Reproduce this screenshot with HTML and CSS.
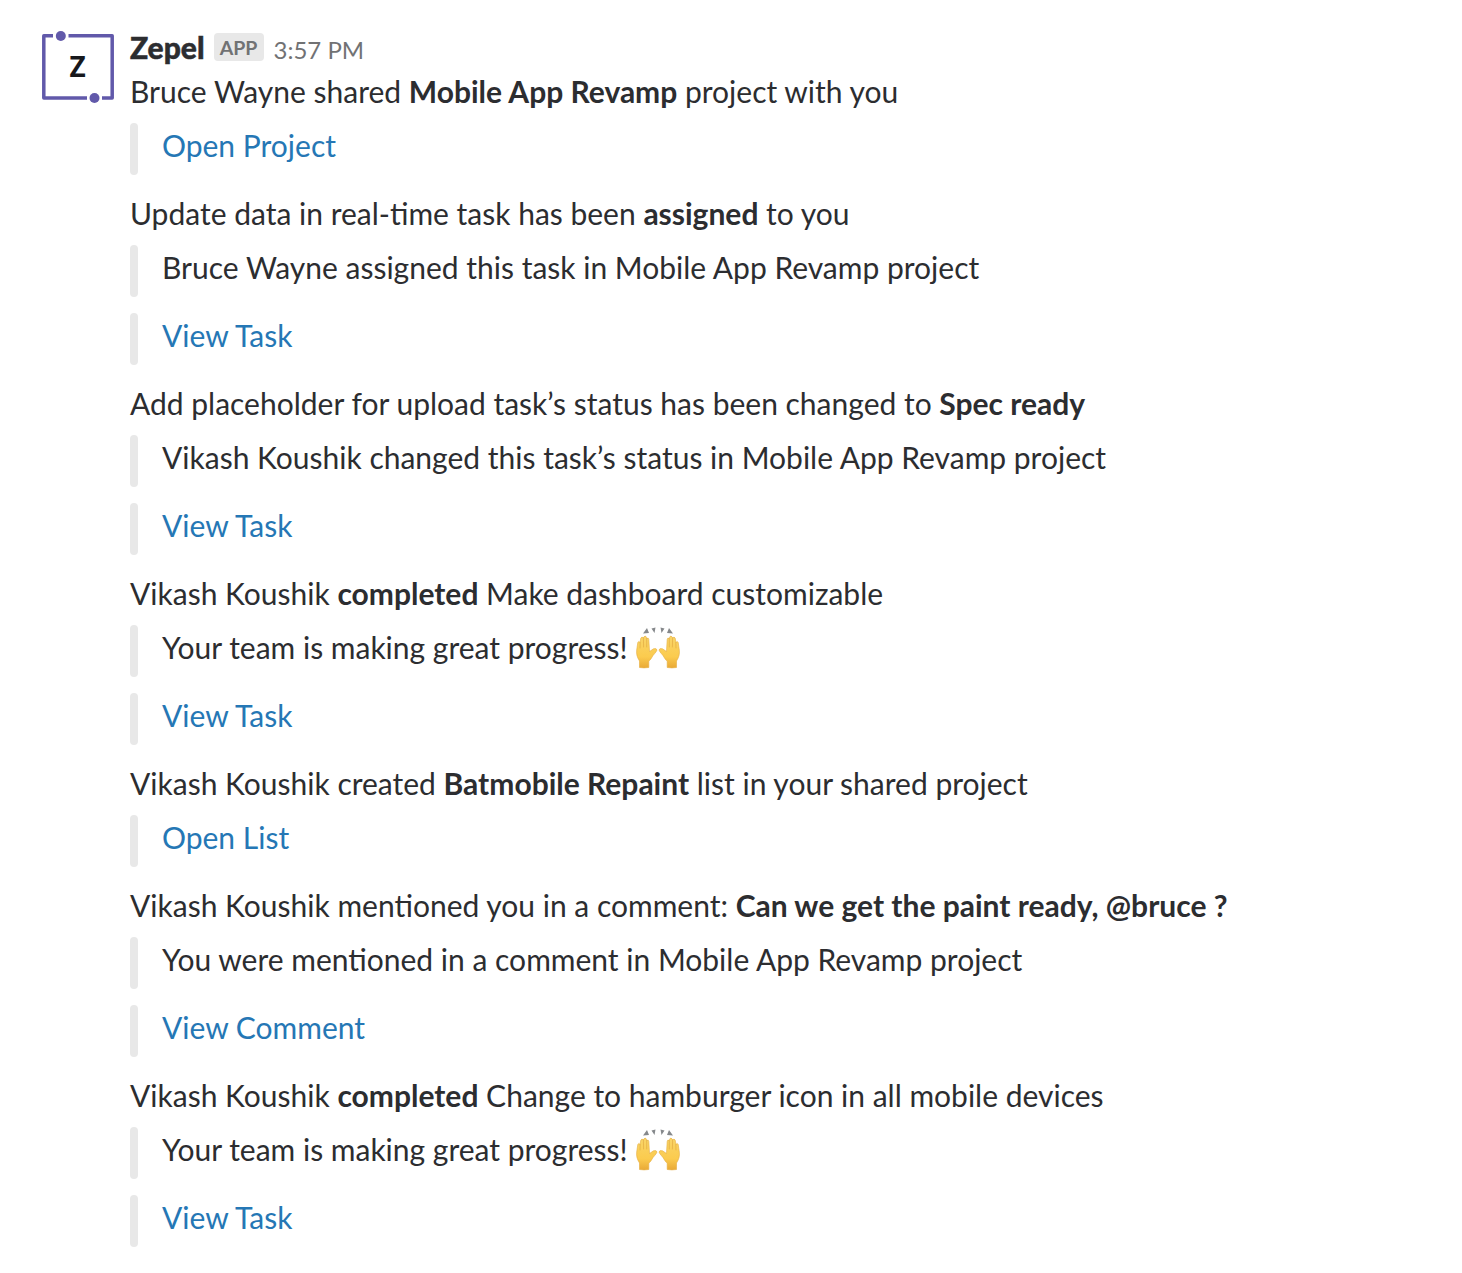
FILE: index.html
```html
<!DOCTYPE html>
<html lang="en">
<head>
<meta charset="utf-8">
<title>Zepel notifications</title>
<link rel="stylesheet" href="styles.css">
</head>
<body>
<svg class="symbols" width="0" height="0">
  <defs>
    <linearGradient id="skin" x1="0" y1="0" x2="0" y2="1"><stop offset="0" stop-color="#f9d568"/><stop offset=".65" stop-color="#fbcb4e"/><stop offset="1" stop-color="#e9a936"/></linearGradient>
  </defs>
  <symbol id="hands" viewBox="0 0 44 44">
    <path fill="#85888b" d="M7 7.500L11 2L13 7zM15.500 2.500L19.500 1.500L18.500 7zM24.500 1.500L28.500 2.500L25.500 7zM33 2L37 7.500L31 7z"/>
    <g id="hand"><path fill="url(#skin)" stroke="#e5ad3e" stroke-width=".6" stroke-linejoin="round" d="M3.500 41.500V35C1 31 .2 28 .7 24L1.800 16.500Q2.600 14.500 3.900 16.500L4.900 12Q6 10 7.200 12L8 10.800Q9.500 9.200 10.400 11.200L10.800 12.500Q12.500 11.300 12.800 13.500L13.500 25.500L17.500 22.800Q20.500 22 21 24C20 27 17 28.500 15.500 32Q14.500 34 12.800 35V41.500Q8 42.300 3.500 41.500z"/><path fill="none" stroke="#dea53e" stroke-width=".6" stroke-linecap="round" d="M4.200 16.500L4 22M7.400 12L7.600 21M10.700 12.500L10.700 21"/></g>
    <use href="#hand" transform="matrix(-1 0 0 1 44 0)"/>
  </symbol>
</svg>
<main class="message">
  <svg class="avatar" viewBox="0 0 72 72"><path fill="none" stroke="#6159aa" stroke-width="3.500" stroke-linejoin="round" d="M11 3.800H1.800V66H45M60 66H70.200V3.800H26.500"/><circle cx="18.800" cy="4" r="5" fill="#6159aa"/><circle cx="52.500" cy="66" r="5" fill="#6159aa"/><text x="35.500" y="45" text-anchor="middle" class="avatar-letter">Z</text></svg>
  <div class="content">
    <header class="header"><b class="name">Zepel</b><span class="badge">APP</span><time class="time">3:57 PM</time></header>
    <section class="item"><p>Bruce Wayne shared <b>Mobile App Revamp</b> project with you</p><div class="quote"><a>Open Project</a></div></section>
    <section class="item"><p>Update data in real-time task has been <b>assigned</b> to you</p><div class="quote">Bruce Wayne assigned this task in Mobile App Revamp project</div><div class="quote"><a>View Task</a></div></section>
    <section class="item"><p>Add placeholder for upload task’s status has been changed to <b>Spec ready</b></p><div class="quote">Vikash Koushik changed this task’s status in Mobile App Revamp project</div><div class="quote"><a>View Task</a></div></section>
    <section class="item"><p>Vikash Koushik <b>completed</b> Make dashboard customizable</p><div class="quote">Your team is making great progress! <svg class="emoji"><use href="#hands"/></svg></div><div class="quote"><a>View Task</a></div></section>
    <section class="item"><p>Vikash Koushik created <b>Batmobile Repaint</b> list in your shared project</p><div class="quote"><a>Open List</a></div></section>
    <section class="item"><p>Vikash Koushik mentioned you in a comment: <b>Can we get the paint ready, @bruce ?</b></p><div class="quote">You were mentioned in a comment in Mobile App Revamp project</div><div class="quote"><a>View Comment</a></div></section>
    <section class="item"><p>Vikash Koushik <b>completed</b> Change to hamburger icon in all mobile devices</p><div class="quote">Your team is making great progress! <svg class="emoji"><use href="#hands"/></svg></div><div class="quote"><a>View Task</a></div></section>
  </div>
</main>
</body>
</html>
```
FILE: styles.css
```css
body { margin: 0; background: #fff; color: #2c2d30; font: 30px/44px Lato, sans-serif; }
.symbols { display: block; height: 0; }
.message { display: flex; gap: 16px; padding: 32px 42px 0; }
.avatar { width: 72px; height: 72px; flex: none; overflow: visible; }
.avatar-letter { font: 700 28px "Open Sans", sans-serif; fill: #17181c; }
.content { flex: 1; white-space: nowrap; }
.header { display: flex; align-items: flex-start; height: 37px; }
.name { font-weight: 900; line-height: 30px; -webkit-text-stroke: .5px #2c2d30; }
.badge { box-sizing: border-box; width: 50px; height: 28px; margin: 1px 0 0 9px; padding-top: 2px; text-align: center; border-radius: 4px; background: #e8e8e8; color: #717274; font-size: 19.5px; font-weight: 700; line-height: 26px; }
.time { margin-left: 10px; color: #717274; font-size: 24px; line-height: 36px; }
p { margin: 0; height: 44px; }
.item { margin-bottom: 16px; }
.quote { display: flex; align-items: flex-start; height: 52px; margin-top: 10px; line-height: 44px; }
.quote + .quote { margin-top: 16px; }
.quote::before { content: ""; width: 8px; height: 52px; margin-right: 24px; border-radius: 4px; background: #e8e8e8; }
a { color: #2577b5; }
.emoji { width: 44px; height: 44px; margin: 1px 0 0 8px; }
```
